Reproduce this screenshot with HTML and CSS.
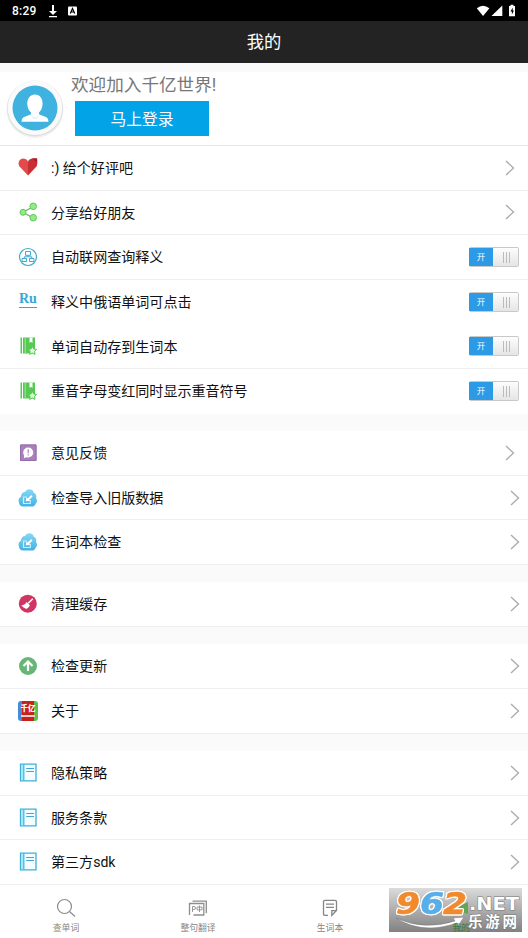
FILE: index.html
```html
<!DOCTYPE html>
<html lang="zh-CN">
<head>
<meta charset="utf-8">
<title>我的</title>
<link rel="stylesheet" href="styles.css">
</head>
<body>
<svg class="defs" width="0" height="0" aria-hidden="true">
  <defs>
    <linearGradient id="sky" x1="0" y1="0" x2="0" y2="1"><stop offset="0" stop-color="#85d8f8"/><stop offset="1" stop-color="#42b1e3"/></linearGradient>
    <linearGradient id="mark" x1="0" y1="0" x2="0" y2="1"><stop offset="0" stop-color="#d8d8d8"/><stop offset=".45" stop-color="#aaa"/><stop offset="1" stop-color="#757575"/></linearGradient>
    <symbol id="chevron" viewBox="0 0 10 16"><path d="M1 1l7.500 7L1 15" fill="none" stroke="#adadad" stroke-width="1.400"/></symbol>
    <symbol id="notebook" viewBox="0 0 20 20"><path d="M2.500 1.500h1.500v16H2.500zM5 1.500h2v16H5z" fill="#55c951"/><path d="M7 1.500h10v16H7z" fill="#55c951"/><path d="M11.500 1.500h3v5.500L13 5.700 11.500 7z" fill="#fff"/><path d="M14.300 10.300l1.400 2.600 2.900.5-2 2.100.4 2.900-2.700-1.300-2.600 1.300.4-2.900-2-2.100 2.900-.5z" fill="#dff8dc" stroke="#55c951"/></symbol>
    <symbol id="cloud" viewBox="0 0 20 20"><path d="M5 18.500C2.500 18.500 1 16.500 1 14.400c-1.200-2.500.1-4.800 2-5.600C2.800 6 4.800 4 7 4c1-2.500 4-3.600 6.500-2.300 1.300.7 2 1.800 2.200 3C18 5.500 18.800 8 18 10c1.600 2 1 4.500-.3 5.500-.5 2-2 3.200-4 3.100z" fill="url(#sky)"/><path d="M9 9H5.500v6.500h6.800V12" fill="none" stroke="#c8effd" stroke-width="1.200"/><path d="M7.700 13.300l.8-4 1.200 1.200 3.500-3.500 1.400 1.400-3.500 3.500 1.200 1.200z" fill="#fff"/></symbol>
    <symbol id="doc" viewBox="0 0 20 20"><path d="M2.500 1.200h15.500v16.600H2.500z" fill="#f4fdff" stroke="#40addb" stroke-width="1.300"/><path d="M3.200 1.900h2v15.200h-2z" fill="#9beafc"/><path d="M5.800 1.500v16" stroke="#40addb" stroke-width="1.200"/><path d="M8.200 5.500h7.800M8.200 8.500h7.800" stroke="#40a7d2" stroke-width="1"/></symbol>
  </defs>
</svg>
<div class="screen">
  <div class="status">
    <span class="clock">8:29</span>
    <svg class="download" width="10" height="14" viewBox="0 0 10 14"><path d="M4 1h2v6h3l-4 4-4-4h3zM1 12h8v1.200H1z" fill="#fff"/></svg>
    <svg class="keyboard" width="9" height="10" viewBox="0 0 9 10"><rect y=".5" width="9" height="9" rx="1" fill="#fff"/><path d="M2.300 7.600L4.500 2.500l2.200 5.100M3 6h3" fill="none" stroke="#000" stroke-width="1.200"/></svg>
    <svg class="signals" width="42" height="14" viewBox="0 0 42 14"><path d="M.8 4.200Q7-.8 13.400 4.200L7.100 12z" fill="#fff"/><path d="M26.300 1.500V12H15.500z" fill="#fff"/><path d="M33 2h1.500V.8h3V2H39v10.200h-6z" fill="#fff"/><path d="M36.700 3.500l-2.200 4h1.400v3l2-4h-1.200z" fill="#000"/></svg>
  </div>
  <header class="header">我的</header>
  <section class="profile">
    <svg class="avatar" width="60" height="62" viewBox="0 0 60 62"><circle cx="30" cy="31.500" r="28.500" fill="#f1f1f1"/><circle cx="30" cy="30.500" r="28" fill="#dedede"/><circle cx="30" cy="29.800" r="27.300" fill="#fafafa"/><circle cx="30" cy="30" r="22.500" fill="#3fb2df"/><path d="M30 16.500c4.800 0 7.800 4 7.600 9.500-.2 4-1.700 7-3.600 8.500v1.800l7.500 3q2 1.200 2 4.500h-27q0-3.500 2-4.500l7.500-3v-1.800c-2-1.500-3.500-4.500-3.700-8.500-.2-5.500 2.900-9.500 7.700-9.500z" fill="#fff"/><path d="M26 36.500q4 4.500 8 0l-1.500 4.500h-5z" fill="#e9f7fc"/></svg>
    <div class="greeting">
      <div class="welcome">欢迎加入千亿世界!</div>
      <div class="login">马上登录</div>
    </div>
  </section>
  <main>
    <section class="group">
      <div class="row">
        <svg class="icon heart" viewBox="0 0 20 20"><path d="M10 18.500L1.500 9.500C-.5 6 1 1.500 5 1.500c2.500 0 4 1.200 5 3z" fill="#e34a4b"/><path d="M10 18.500l8.500-9c1-2 .9-4.500.7-8Q12.200.3 10 4.500z" fill="#c92e35"/><path d="M14 1.500l5 4v-4z" fill="#a91f29"/></svg>
        <span class="label">:) 给个好评吧</span><svg class="arrow"><use href="#chevron"/></svg>
      </div>
      <div class="row">
        <svg class="icon" viewBox="0 0 20 20"><path d="M5 10.300l10-5.600M5 10.300l10 5.600" stroke="#6aaf68" stroke-width="1.200"/><g fill="#94ea88" stroke="#5fc95a"><circle cx="5" cy="10.300" r="3"/><circle cx="15.200" cy="4.300" r="3.300"/><circle cx="15.200" cy="15.700" r="3.300"/></g></svg>
        <span class="label">分享给好朋友</span><svg class="arrow"><use href="#chevron"/></svg>
      </div>
      <div class="row">
        <svg class="icon" viewBox="0 0 20 20"><g fill="none" stroke="#3faacd"><circle cx="10" cy="10" r="8.500" stroke-width="1.200"/><path d="M7.500 4.500h5v3.800h-5zM4 11.500h4.500v3H4zM11.500 11.500H16v3h-4.500zM10 8.300v1.500M6.300 11.500V9.800h7.500v1.700"/></g></svg>
        <span class="label">自动联网查询释义</span><span class="switch"><span class="on">开</span><span class="knob"></span></span>
      </div>
      <div class="row plain">
        <span class="icon ru">Ru</span>
        <span class="label">释义中俄语单词可点击</span><span class="switch"><span class="on">开</span><span class="knob"></span></span>
      </div>
      <div class="row">
        <svg class="icon" viewBox="0 0 20 20"><use href="#notebook"/><path d="M7.200 1.500v16" stroke="#a6e6a2"/></svg>
        <span class="label">单词自动存到生词本</span><span class="switch"><span class="on">开</span><span class="knob"></span></span>
      </div>
      <div class="row plain">
        <svg class="icon" viewBox="0 0 20 20"><use href="#notebook"/><path d="M7.200 1.500v16" stroke="#a6e6a2"/></svg>
        <span class="label">重音字母变红同时显示重音符号</span><span class="switch"><span class="on">开</span><span class="knob"></span></span>
      </div>
    </section>
    <section class="group">
      <div class="row">
        <svg class="icon" viewBox="0 0 20 20"><rect x="2" y="1.500" width="16.500" height="16.500" rx="1" fill="#aa80bc"/><path d="M2.500 2h15.500v15.500H2.500z" fill="none" stroke="#936bab"/><circle cx="10.200" cy="9.500" r="5" fill="#fff"/><path d="M6 11.500v3.500l4-1z" fill="#fff"/><path d="M10.200 6.200v4M10.200 11.200v1.200" stroke="#a982ba" stroke-width="1.200"/></svg>
        <span class="label">意见反馈</span><svg class="arrow"><use href="#chevron"/></svg>
      </div>
      <div class="row">
        <svg class="icon"><use href="#cloud"/></svg>
        <span class="label">检查导入旧版数据</span><svg class="arrow far"><use href="#chevron"/></svg>
      </div>
      <div class="row">
        <svg class="icon"><use href="#cloud"/></svg>
        <span class="label">生词本检查</span><svg class="arrow far"><use href="#chevron"/></svg>
      </div>
    </section>
    <section class="group">
      <div class="row">
        <svg class="icon" viewBox="0 0 20 20"><circle cx="9.800" cy="9.700" r="9" fill="#d13563"/><path d="M14.800 4.700l-4.500 4.500" stroke="#fff" stroke-width="1.500"/><path d="M8.700 8l3.200 3.300c-.8 2-2 3-3.500 3.600-2-.8-3.800-2-5-3.500 2-.2 4-1.300 5.300-3.400z" fill="#fff"/></svg>
        <span class="label">清理缓存</span><svg class="arrow far"><use href="#chevron"/></svg>
      </div>
    </section>
    <section class="group">
      <div class="row">
        <svg class="icon" viewBox="0 0 20 20"><circle cx="10" cy="10" r="9" fill="#68b578"/><path d="M10 15V6.500M5.500 10L10 5.500l4.500 4.500" fill="none" stroke="#fff" stroke-width="2.200"/></svg>
        <span class="label">检查更新</span><svg class="arrow far"><use href="#chevron"/></svg>
      </div>
      <div class="row">
        <span class="icon app"><span class="app-name">千亿</span><span class="app-line"></span></span>
        <span class="label">关于</span><svg class="arrow far"><use href="#chevron"/></svg>
      </div>
    </section>
    <section class="group">
      <div class="row"><svg class="icon"><use href="#doc"/></svg><span class="label">隐私策略</span><svg class="arrow far"><use href="#chevron"/></svg></div>
      <div class="row"><svg class="icon"><use href="#doc"/></svg><span class="label">服务条款</span><svg class="arrow far"><use href="#chevron"/></svg></div>
      <div class="row"><svg class="icon"><use href="#doc"/></svg><span class="label">第三方sdk</span><svg class="arrow far"><use href="#chevron"/></svg></div>
    </section>
  </main>
  <nav class="tabs">
    <div class="tab">
      <svg width="20" height="20" viewBox="0 0 20 20"><g fill="none" stroke="#8b8b8b" stroke-width="1.200"><circle cx="8.500" cy="8.500" r="7"/><path d="M13.500 13.500l5.500 5"/></g></svg><span>查单词</span>
    </div>
    <div class="tab">
      <svg width="20" height="20" viewBox="0 0 20 20"><path d="M4.500 3.200h13.800v12M1.500 17V5.500h14.300V17H5.500" fill="none" stroke="#8e8e8e" stroke-width="1.300"/><path d="M4.500 14V8.500H6q1.500 0 1.500 1.500T6 11.500H4.500M9 9h5v2.800H9zM11.500 7.500V14" fill="none" stroke="#8e8e8e" stroke-width=".9"/></svg><span>整句翻译</span>
    </div>
    <div class="tab">
      <svg width="20" height="20" viewBox="0 0 20 20"><path d="M8 17.300H5q-1.500 0-1.500-1.500v-12q0-1.500 1.500-1.500h10q1.500 0 1.500 1.500v8.700l-4.700 4.800v-4.700h4.700M6 6.200h8M6 9.400h8" fill="none" stroke="#858585" stroke-width="1.300"/></svg><span>生词本</span>
    </div>
    <div class="tab"></div>
    <svg class="watermark" width="133" height="44" viewBox="0 0 133 44">
      <rect width="133" height="44" fill="url(#mark)" opacity=".91"/>
      <path d="M69 19l10-5v12l-7-2z" fill="#62a653"/>
      <g class="digits"><text x="7" y="26" textLength="24" lengthAdjust="spacingAndGlyphs">9</text><text class="blue" x="31" y="26" textLength="24" lengthAdjust="spacingAndGlyphs">6</text><text x="54" y="26" textLength="24" lengthAdjust="spacingAndGlyphs">2</text></g>
      <text class="net" x="80" y="22" textLength="50" lengthAdjust="spacingAndGlyphs">.NET</text>
      <path d="M7 30Q35 43 66 33l-2-3 11-1-6 9-1-3Q33 47 7 30z" fill="#fff" stroke="#777" stroke-width=".5"/>
      <text class="mine" x="63.500" y="43">我的</text>
      <text class="site" x="79" y="39" textLength="49">乐游网</text>
    </svg>
  </nav>
</div>
</body>
</html>
```
FILE: styles.css
```css
* { box-sizing: border-box; }
body {
  margin: 0;
  background: #fff;
  color: #111;
  font-family: Roboto, "Noto Sans CJK SC", sans-serif;
}
.defs { position: absolute; }
.screen { width: 528px; height: 938px; overflow: hidden; }
.status { height: 21px; background: #000; color: #fff; display: flex; align-items: center; padding: 0 11px 0 12px; }
.clock { font-size: 12px; font-weight: 500; width: 25px; letter-spacing: .25px; }
.download { margin-left: 11px; }
.keyboard { margin-left: 10px; }
.signals { margin-left: auto; margin-right: -1px; }
.header {
  height: 42px;
  background: #232324;
  color: #fff;
  font-size: 17.3px;
  line-height: 42px;
  text-align: center;
}
.profile {
  height: 83px;
  border-top: 9px solid #fafafa;
  border-bottom: 1px solid #e8e8e8;
  display: flex;
  padding-left: 5px;
}
.avatar { margin-top: 6px; }
.greeting { padding: 1px 0 0 6px; }
.welcome { height: 28px; line-height: 25px; font-size: 17.6px; color: #777; }
.login {
  width: 134px;
  height: 35px;
  margin-left: 4px;
  background: #03a3e7;
  color: #fff;
  font-size: 15.8px;
  line-height: 37px;
  text-align: center;
}
main { background: #fafafa; display: flex; flex-direction: column; gap: 17.4px; }
.group { background: #fff; }
.row {
  height: 44.63px;
  border-bottom: 1px solid #eee;
  display: flex;
  align-items: center;
  padding: 0 9px 0 18px;
}
.row.plain { border-color: transparent; }
.icon { width: 20px; height: 20px; flex: none; }
.heart { margin-top: -2px; }
.label { flex: 1; margin-left: 13px; padding-top: .5px; font-size: 14.05px; line-height: 20px; white-space: nowrap; }
.arrow { width: 10px; height: 16px; margin-right: 4px; }
.arrow.far { margin-right: -1px; }
.ru {
  width: 18px;
  height: 16px;
  margin: 0 1px 3px 1px;
  border-bottom: 1px solid #3aa5cc;
  color: #38a9d5;
  font: bold 14px/13px "Liberation Serif", serif;
}
.switch { width: 50px; height: 20px; display: flex; border: 1px solid #c9c9c9; border-left: 0; border-radius: 2px; overflow: hidden; }
.on { width: 24px; background: #2c9ae5; box-shadow: 0 0 0 1px #2388cf; color: #fff; font-size: 8.5px; line-height: 18px; text-align: center; }
.knob {
  flex: 1;
  background:
    linear-gradient(#bbb, #bbb) 10px 4px / 1px 11px no-repeat,
    linear-gradient(#bbb, #bbb) 13px 4px / 1px 11px no-repeat,
    linear-gradient(#bbb, #bbb) 16px 4px / 1px 11px no-repeat,
    linear-gradient(#fdfdfd, #e5e5e5);
}
.app {
  border-radius: 3px;
  background: linear-gradient(90deg, #468bd9 0 20%, #c8201d 20% 80%, #65bd49 80%);
  color: #fff;
  text-align: center;
}
.app-name { display: block; font-size: 7.5px; font-weight: 900; line-height: 12px; padding-top: 2px; white-space: nowrap; }
.app-line { display: block; height: 2px; margin: 0 3px; background: #ecc; }
.tabs { position: relative; display: grid; grid-template-columns: repeat(4, 1fr); height: 53px; }
.tab { display: flex; flex-direction: column; align-items: center; padding-top: 13px; font-size: 8.8px; line-height: 12px; color: #858585; }
.tab span { margin-top: 4px; }
.tab svg { flex: none; }
.watermark { position: absolute; left: 389px; top: 3px; }
.digits {
  font: italic bold 30px "DejaVu Sans", sans-serif;
  fill: #f18a2c;
  stroke: #f18a2c;
  stroke-width: .6px;
  filter: drop-shadow(1px 0 #fff) drop-shadow(-1px 0 #fff) drop-shadow(0 1px #fff) drop-shadow(0 -1px #fff);
}
.digits .blue { fill: #58aee8; stroke: #58aee8; }
.net { font: bold 17.5px "DejaVu Sans", sans-serif; fill: #fff; stroke: #777; stroke-width: 1px; paint-order: stroke; }
.site { font: bold 14.5px "Noto Sans CJK SC", sans-serif; fill: #fff; stroke: #777; stroke-width: 1px; paint-order: stroke; }
.mine { font: 8.8px "Noto Sans CJK SC", sans-serif; fill: #397b36; }
```
